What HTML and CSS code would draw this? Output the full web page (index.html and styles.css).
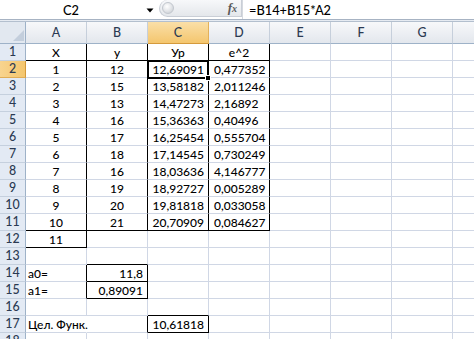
FILE: index.html
```html
<!DOCTYPE html>
<html lang="ru">
<head>
<meta charset="utf-8">
<title>Excel</title>
<link rel="stylesheet" href="styles.css">
</head>
<body>
<div class="app">
  <div class="fbar">
    <div class="namebox">C2</div>
    <div class="nbdrop"><svg width="8" height="5" viewBox="0 0 8 5"><polygon points="0.5,0.5 7.5,0.5 4,4.5" fill="#000"/></svg></div>
    <div class="pill"><span class="knob"></span><span class="fx">f<span class="fxx">x</span></span></div>
    <div class="formula">=B14+B15*A2</div>
  </div>
  <div class="strip"></div>
  <div class="sheet">
    <div class="r hdr">
      <div class="corner"><svg width="26" height="21" viewBox="0 0 26 21"><polygon points="24,8 24,19 13,19" fill="#c3cedc"/></svg></div>
      <div class="ch">A</div><div class="ch">B</div><div class="ch sel">C</div><div class="ch">D</div><div class="ch">E</div><div class="ch">F</div><div class="ch">G</div><div class="ch"></div>
    </div>
    <div class="r"><div class="h">1</div><div class="c ctr kr kb">X</div><div class="c ctr kr kb">у</div><div class="c ctr kr kb">Ур</div><div class="c ctr kr kb">e^2</div><div class="c"></div><div class="c"></div><div class="c"></div><div class="c"></div></div>
    <div class="r"><div class="h sel">2</div><div class="c ctr kr">1</div><div class="c ctr kr">12</div><div class="c rt kr act">12,69091</div><div class="c lt kr">0,477352</div><div class="c"></div><div class="c"></div><div class="c"></div><div class="c"></div></div>
    <div class="r"><div class="h">3</div><div class="c ctr kr">2</div><div class="c ctr kr">15</div><div class="c rt kr">13,58182</div><div class="c lt kr">2,011246</div><div class="c"></div><div class="c"></div><div class="c"></div><div class="c"></div></div>
    <div class="r"><div class="h">4</div><div class="c ctr kr">3</div><div class="c ctr kr">13</div><div class="c rt kr">14,47273</div><div class="c lt kr">2,16892</div><div class="c"></div><div class="c"></div><div class="c"></div><div class="c"></div></div>
    <div class="r"><div class="h">5</div><div class="c ctr kr">4</div><div class="c ctr kr">16</div><div class="c rt kr">15,36363</div><div class="c lt kr">0,40496</div><div class="c"></div><div class="c"></div><div class="c"></div><div class="c"></div></div>
    <div class="r"><div class="h">6</div><div class="c ctr kr">5</div><div class="c ctr kr">17</div><div class="c rt kr">16,25454</div><div class="c lt kr">0,555704</div><div class="c"></div><div class="c"></div><div class="c"></div><div class="c"></div></div>
    <div class="r"><div class="h">7</div><div class="c ctr kr">6</div><div class="c ctr kr">18</div><div class="c rt kr">17,14545</div><div class="c lt kr">0,730249</div><div class="c"></div><div class="c"></div><div class="c"></div><div class="c"></div></div>
    <div class="r"><div class="h">8</div><div class="c ctr kr">7</div><div class="c ctr kr">16</div><div class="c rt kr">18,03636</div><div class="c lt kr">4,146777</div><div class="c"></div><div class="c"></div><div class="c"></div><div class="c"></div></div>
    <div class="r"><div class="h">9</div><div class="c ctr kr">8</div><div class="c ctr kr">19</div><div class="c rt kr">18,92727</div><div class="c lt kr">0,005289</div><div class="c"></div><div class="c"></div><div class="c"></div><div class="c"></div></div>
    <div class="r"><div class="h">10</div><div class="c ctr kr">9</div><div class="c ctr kr">20</div><div class="c rt kr">19,81818</div><div class="c lt kr">0,033058</div><div class="c"></div><div class="c"></div><div class="c"></div><div class="c"></div></div>
    <div class="r"><div class="h">11</div><div class="c ctr kr kb">10</div><div class="c ctr kr kb">21</div><div class="c rt kr kb">20,70909</div><div class="c lt kr kb">0,084627</div><div class="c"></div><div class="c"></div><div class="c"></div><div class="c"></div></div>
    <div class="r"><div class="h">12</div><div class="c ctr kr kb">11</div><div class="c"></div><div class="c"></div><div class="c"></div><div class="c"></div><div class="c"></div><div class="c"></div><div class="c"></div></div>
    <div class="r"><div class="h">13</div><div class="c"></div><div class="c kb"></div><div class="c"></div><div class="c"></div><div class="c"></div><div class="c"></div><div class="c"></div><div class="c"></div></div>
    <div class="r"><div class="h">14</div><div class="c lt kr">a0=</div><div class="c rt kr kb">11,8</div><div class="c"></div><div class="c"></div><div class="c"></div><div class="c"></div><div class="c"></div><div class="c"></div></div>
    <div class="r"><div class="h">15</div><div class="c lt kr">a1=</div><div class="c rt kr kb">0,89091</div><div class="c"></div><div class="c"></div><div class="c"></div><div class="c"></div><div class="c"></div><div class="c"></div></div>
    <div class="r"><div class="h">16</div><div class="c"></div><div class="c"></div><div class="c kb"></div><div class="c"></div><div class="c"></div><div class="c"></div><div class="c"></div><div class="c"></div></div>
    <div class="r"><div class="h">17</div><div class="c lt spill">Цел. Функ.</div><div class="c kr"></div><div class="c rt kr kb">10,61818</div><div class="c"></div><div class="c"></div><div class="c"></div><div class="c"></div><div class="c"></div></div>
    <div class="r"><div class="h">18</div><div class="c"></div><div class="c"></div><div class="c"></div><div class="c"></div><div class="c"></div><div class="c"></div><div class="c"></div><div class="c"></div></div>
  </div>
</div>
</body>
</html>
```
FILE: styles.css
```css
html, body {
  margin: 0;
  padding: 0;
  background: #fff;
}
.app {
  width: 474px;
  height: 339px;
  overflow: hidden;
  font-family: "Lato", "Open Sans", sans-serif;
  font-size: 12px;
  font-weight: 500;
  color: #000;
}
.fbar {
  display: flex;
  height: 20px;
  box-sizing: border-box;
  border-bottom: 1px solid #a7b3c3;
  background: #fff;
}
.namebox {
  width: 142px;
  text-align: center;
  line-height: 20px;
  font-size: 12.8px;
}
.nbdrop {
  width: 17px;
  display: flex;
  align-items: flex-start;
  padding-top: 8px;
  padding-left: 4px;
  box-sizing: border-box;
}
.pill {
  width: 83px;
  height: 17px;
  box-sizing: border-box;
  border: 1px solid #c9ced6;
  border-top: none;
  border-radius: 9px 0 0 9px;
  background: linear-gradient(#f7f8fa, #e4e7eb);
  display: flex;
  align-items: center;
  padding-left: 2px;
}
.knob {
  width: 12px;
  height: 12px;
  border-radius: 50%;
  background: radial-gradient(circle at 40% 35%, #ffffff 0, #e6e8eb 45%, #c4c8ce 100%);
  border: 1px solid #c2c7ce;
  box-sizing: border-box;
}
.fx {
  margin-left: auto;
  margin-right: 4px;
  font-family: "Liberation Serif", serif;
  font-style: italic;
  font-weight: bold;
  font-size: 13px;
  color: #5a5a5a;
  line-height: 16px;
}
.fxx {
  font-size: 10px;
}
.formula {
  flex: 1;
  padding-left: 6px;
  line-height: 20px;
  font-size: 12.8px;
  border-left: 1px solid #d5d9df;
}
.strip {
  height: 2px;
  box-sizing: border-box;
  background: #e6ebf2;
  border-bottom: 1px solid #b3bfce;
}
.sheet {
  width: 474px;
  overflow: hidden;
}
.r {
  display: grid;
  grid-template-columns: 26px repeat(8, 61px);
  height: 17px;
}
.r.hdr {
  height: 22px;
}
.corner {
  background: #e2e8f0;
  border-right: 1px solid #9eb2c8;
  border-bottom: 1px solid #9eb2c8;
  box-sizing: border-box;
  height: 22px;
  overflow: hidden;
}
.corner svg {
  display: block;
}
.ch {
  height: 22px;
  box-sizing: border-box;
  background: linear-gradient(#f7f8fa, #e3e7ed);
  border-right: 1px solid #c6cfdb;
  border-bottom: 1px solid #9eb2c8;
  text-align: center;
  line-height: 21px;
  font-size: 12.4px;
  color: #2b3a52;
}
.ch.sel {
  background: linear-gradient(#fadfa8, #f4c66e);
  border-right-color: #e3b15a;
  border-bottom-color: #d49a3c;
}
.h {
  height: 17px;
  box-sizing: border-box;
  background: #e3eaf4;
  border-right: 1px solid #9eb2c8;
  border-bottom: 1px solid #c5d0de;
  text-align: center;
  line-height: 16px;
  font-size: 12.4px;
  color: #2b3a52;
}
.h.sel {
  background: linear-gradient(90deg, #f8d48f, #f4c66e);
  border-bottom-color: #e0ad57;
  border-right-color: #d49a3c;
}
.c {
  height: 17px;
  box-sizing: border-box;
  border-right: 1px solid #d0d7e5;
  border-bottom: 1px solid #d0d7e5;
  padding: 2px 3px 0 3px;
  line-height: 14px;
  white-space: nowrap;
}
.ctr { text-align: center; }
.rt { text-align: right; padding-right: 4px; }
.lt { text-align: left; padding-left: 2px; }
.c.lt.kr:nth-child(5) { padding-left: 5px; }
.kr { border-right-color: #000; }
.kb { border-bottom-color: #000; }
.spill {
  overflow: visible;
  border-right-color: transparent;
}
.act {
  position: relative;
}
.act::before {
  content: "";
  position: absolute;
  left: -1px;
  top: -1px;
  right: -1px;
  bottom: -2px;
  border: 2px solid #000;
}
.act::after {
  content: "";
  position: absolute;
  right: -3px;
  bottom: -4px;
  width: 4px;
  height: 4px;
  background: #000;
  border: 1px solid #fff;
}
```
